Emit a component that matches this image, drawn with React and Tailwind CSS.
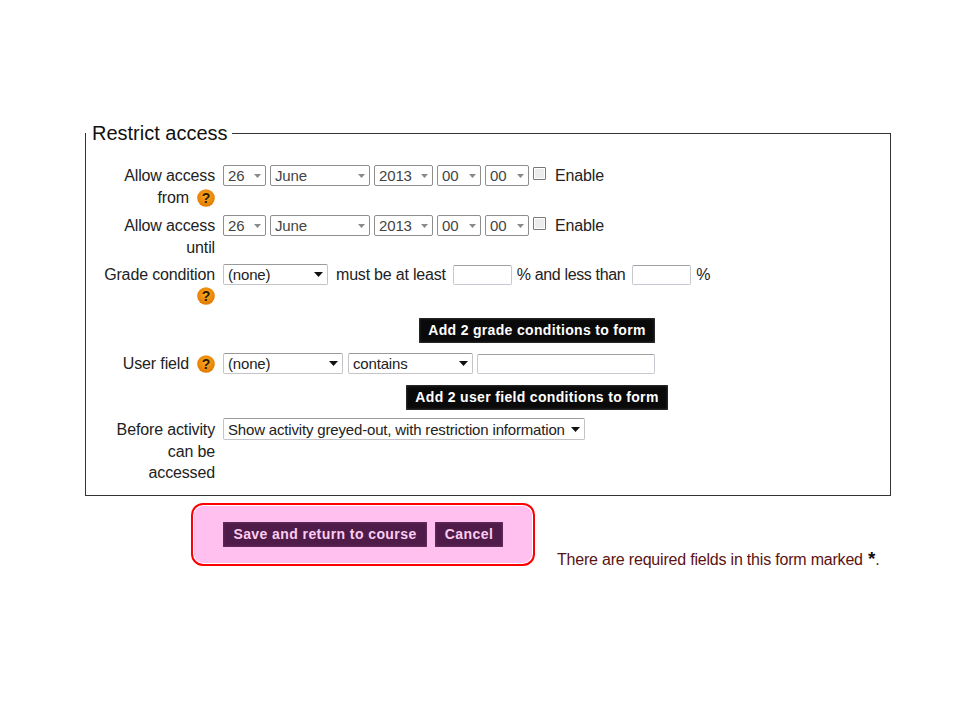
function Help() {
  return (
    <svg width="18" height="18" viewBox="0 0 18 18" className="shrink-0">
      <defs>
        <radialGradient id="helpOrange" cx="50%" cy="40%" r="60%">
          <stop offset="0%" stopColor="#ffa820" />
          <stop offset="100%" stopColor="#e07a00" />
        </radialGradient>
      </defs>
      <circle cx="9" cy="9" r="8.8" fill="url(#helpOrange)" />
      <text x="9" y="14" textAnchor="middle" fontSize="14" fontWeight="700" fill="#2a1a00" fontFamily="Liberation Sans, sans-serif">?</text>
    </svg>
  );
}

function Caret({ dark }) {
  return dark ? (
    <svg width="9" height="5" viewBox="0 0 9 5" className="shrink-0">
      <path d="M0 0h9L4.5 5z" fill="#111111" />
    </svg>
  ) : (
    <svg width="7" height="4" viewBox="0 0 7 4" className="shrink-0">
      <path d="M0 0h7L3.5 4z" fill="#8a8a8a" />
    </svg>
  );
}

// date pickers are drawn with the older grey look, the rest with the flat one
function DateSelect({ className, children }) {
  return (
    <div className={"flex h-[21px] items-center justify-between rounded-[2px] border border-[#8e8e8e] bg-white pl-[4px] pr-[4px] text-[15px] text-[#444] " + className}>
      <span className="pt-[1px]">{children}</span>
      <Caret />
    </div>
  );
}

function Select({ className, children }) {
  return (
    <div className={"flex h-[21px] items-center justify-between rounded-[2px] border border-[#c4c4c8] border-t-[#9a9a9a] bg-white pl-[4px] pr-[4px] text-[15px] tracking-[-0.17px] text-[#222] " + className}>
      <span className="pt-[2px]">{children}</span>
      <Caret dark />
    </div>
  );
}

function TextInput({ className }) {
  return <div className={"h-[20px] rounded-[2px] border border-[#c8c8d0] border-t-[#a0a0a0] bg-white " + className} />;
}

function DateRow({ first, second, help }) {
  return (
    <div className="flex h-[50px]">
      <div className="w-[129px] pt-[2px] text-right leading-[22px]">
        <div>{first}</div>
        <div className="flex items-center justify-end gap-[8px]">
          {second}
          {help && <Help />}
        </div>
      </div>
      <div className="ml-[8px] mt-[2px] flex h-[21px] items-center gap-[4px]">
        <DateSelect className="w-[43px]">26</DateSelect>
        <DateSelect className="w-[100px]">June</DateSelect>
        <DateSelect className="w-[59px]">2013</DateSelect>
        <DateSelect className="w-[44px]">00</DateSelect>
        <DateSelect className="w-[44px]">00</DateSelect>
        <div className="-mt-[5px] h-[13px] w-[13px] rounded-[1px] border border-[#777] bg-[#ececec] shadow-[inset_0_0_0_1px_#fff]" />
        <span className="ml-[5px]">Enable</span>
      </div>
    </div>
  );
}

function BlackButton({ className, children }) {
  return (
    <div className={"flex h-[25px] items-center justify-center bg-[#0a0a0a] text-[14px] font-bold tracking-[0.33px] text-white shadow-[inset_0_0_3px_#555] " + className}>
      {children}
    </div>
  );
}

function PlumButton({ className, children }) {
  return (
    <div className={"flex h-[25px] items-center justify-center bg-[#4f1b49] text-[14px] font-bold tracking-[0.42px] text-[#fbcdf1] shadow-[inset_0_0_3px_#7a3a72] " + className}>
      {children}
    </div>
  );
}

export default function App() {
  return (
    <div className="h-[720px] w-[960px] bg-white pl-[85px] pt-[121px] text-[16px] tracking-[-0.14px] text-[#222] font-['Liberation_Sans',Arial,sans-serif]">
      <fieldset className="h-[375px] w-[806px] border border-[#333]">
        <legend className="pl-[6px] pr-[4px] text-[20px] leading-[24px] tracking-normal text-[#111]">Restrict access</legend>

        <div className="pt-[18px]">
          <DateRow first="Allow access" second="from" help />
          <DateRow first="Allow access" second="until" />

          {/* grade */}
          <div className="flex h-[55px]">
            <div className="w-[129px] pt-[1px] text-right leading-[22px]">
              <div>Grade condition</div>
              <div className="flex justify-end pt-[1px]">
                <Help />
              </div>
            </div>
            <div className="ml-[8px] mt-[1px] flex h-[21px] items-center tracking-[-0.2px]">
              <Select className="w-[105px]">(none)</Select>
              <span className="ml-[8px]">must be at least</span>
              <TextInput className="ml-[7px] w-[59px]" />
              <span className="ml-[5px] tracking-[-0.35px]">% and less than</span>
              <TextInput className="ml-[7px] w-[59px]" />
              <span className="ml-[5px]">%</span>
            </div>
          </div>

          <div className="flex justify-start pl-[333px]">
            <BlackButton className="w-[236px]">Add 2 grade conditions to form</BlackButton>
          </div>

          {/* user field */}
          <div className="mt-[10px] flex h-[32px]">
            <div className="flex h-[22px] w-[129px] items-center justify-end gap-[8px]">
              User field
              <Help />
            </div>
            <div className="ml-[8px] flex h-[21px] items-center">
              <Select className="w-[120px]">(none)</Select>
              <Select className="ml-[5px] w-[125px]">contains</Select>
              <TextInput className="ml-[4px] w-[178px]" />
            </div>
          </div>

          <div className="flex pl-[320px]">
            <BlackButton className="w-[262px]">Add 2 user field conditions to form</BlackButton>
          </div>

          {/* before activity */}
          <div className="mt-[8px] flex">
            <div className="w-[129px] pt-[1px] text-right leading-[21.5px]">
              <div>Before activity</div>
              <div>can be</div>
              <div>accessed</div>
            </div>
            <div className="ml-[8px]">
              <Select className="!h-[22px] w-[362px]">Show activity greyed-out, with restriction information</Select>
            </div>
          </div>
        </div>
      </fieldset>

      <div className="mt-[7px] flex items-start pl-[106px]">
        <div className="flex h-[63px] w-[344px] items-center gap-[8px] rounded-[12px] border-2 border-[#ff0000] bg-[#ffbfef] pl-[30px] shadow-[inset_0_0_0_1px_#fff]">
          <PlumButton className="w-[204px]">Save and return to course</PlumButton>
          <PlumButton className="w-[68px]">Cancel</PlumButton>
        </div>
        <div className="ml-[22px] mt-[45px] tracking-[-0.2px] text-[#5b1212]">
          There are required fields in this form marked <span className="ml-[1px] align-baseline text-[19px] leading-none font-bold text-[#111]">*</span>.
        </div>
      </div>
    </div>
  );
}
